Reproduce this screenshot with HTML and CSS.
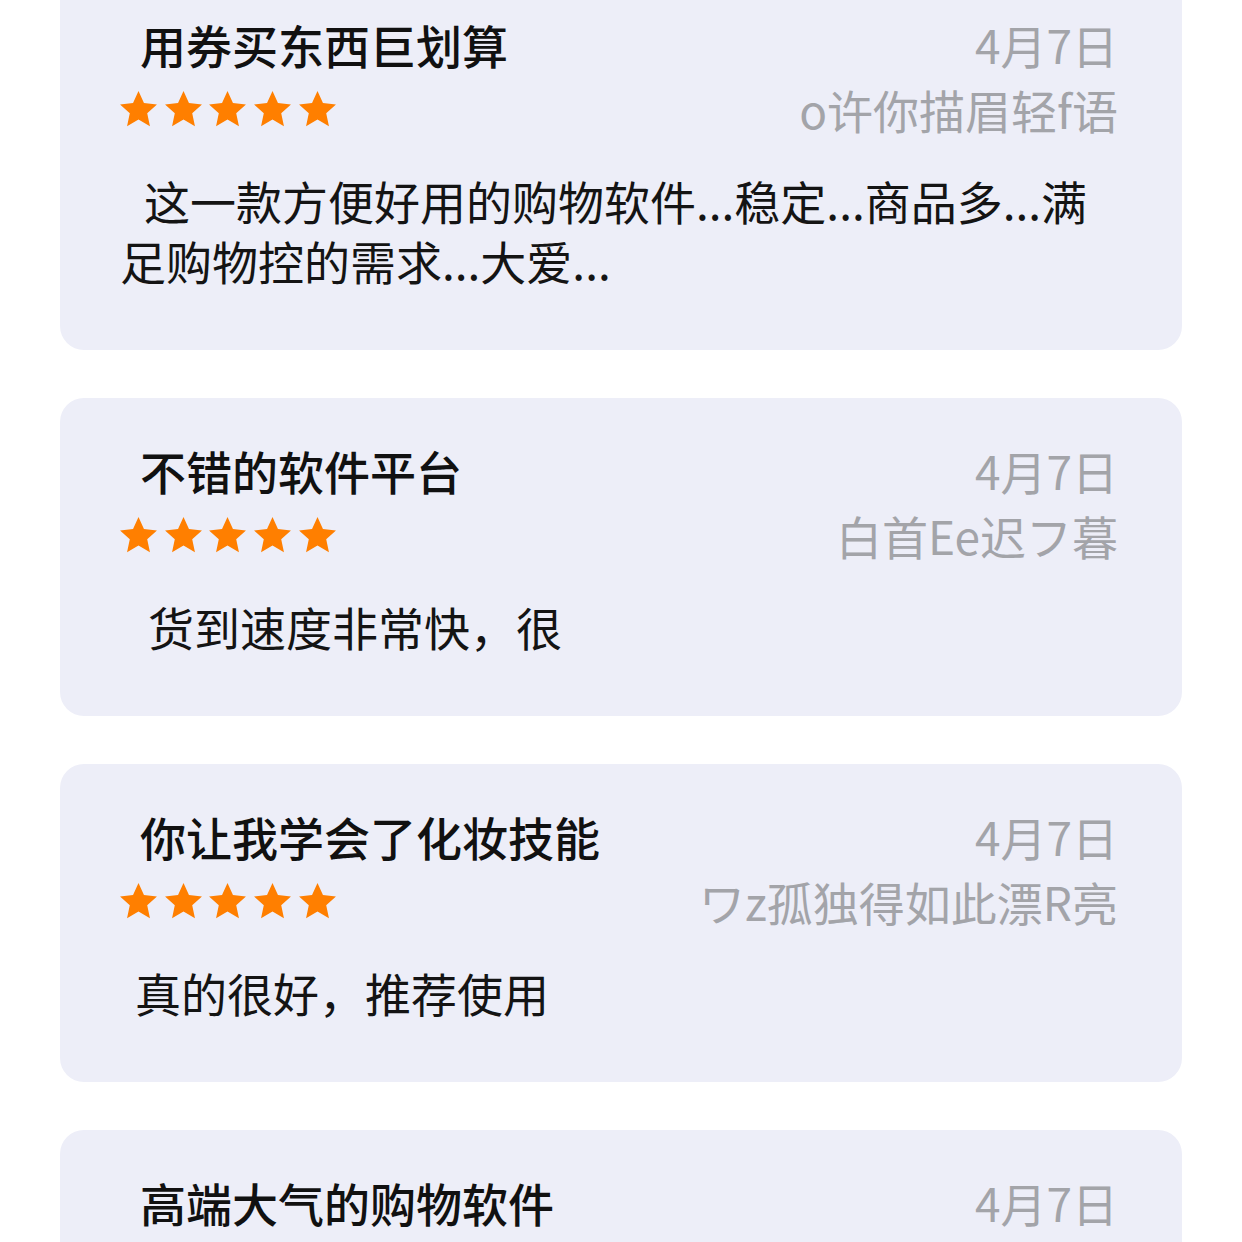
FILE: index.html
```html
<!DOCTYPE html>
<html lang="zh-CN">
<head>
    <meta charset="UTF-8">
    <meta name="viewport" content="width=device-width, initial-scale=1.0">
    <title>评价</title>
    <link rel="stylesheet" href="styles.css">
</head>
<body>
    <div class="review-list">
        <div class="review-card">
            <div class="review-head">
                <span class="review-title">用券买东西巨划算</span>
                <span class="review-date">4月7日</span>
            </div>
            <div class="review-meta">
                <span class="stars">
                    <svg viewBox="0 0 24 24"><path d="M12 1.2l3.2 7 7.6.8-5.7 5.2 1.6 7.6L12 17.9l-6.7 3.9 1.6-7.6L1.2 9l7.6-.8z"/></svg>
                    <svg viewBox="0 0 24 24"><path d="M12 1.2l3.2 7 7.6.8-5.7 5.2 1.6 7.6L12 17.9l-6.7 3.9 1.6-7.6L1.2 9l7.6-.8z"/></svg>
                    <svg viewBox="0 0 24 24"><path d="M12 1.2l3.2 7 7.6.8-5.7 5.2 1.6 7.6L12 17.9l-6.7 3.9 1.6-7.6L1.2 9l7.6-.8z"/></svg>
                    <svg viewBox="0 0 24 24"><path d="M12 1.2l3.2 7 7.6.8-5.7 5.2 1.6 7.6L12 17.9l-6.7 3.9 1.6-7.6L1.2 9l7.6-.8z"/></svg>
                    <svg viewBox="0 0 24 24"><path d="M12 1.2l3.2 7 7.6.8-5.7 5.2 1.6 7.6L12 17.9l-6.7 3.9 1.6-7.6L1.2 9l7.6-.8z"/></svg>
                </span>
                <span class="review-user">o许你描眉轻f语</span>
            </div>
            <p class="review-text indent-md">这一款方便好用的购物软件...稳定...商品多...满足购物控的需求...大爱...</p>
        </div>

        <div class="review-card">
            <div class="review-head">
                <span class="review-title">不错的软件平台</span>
                <span class="review-date">4月7日</span>
            </div>
            <div class="review-meta">
                <span class="stars">
                    <svg viewBox="0 0 24 24"><path d="M12 1.2l3.2 7 7.6.8-5.7 5.2 1.6 7.6L12 17.9l-6.7 3.9 1.6-7.6L1.2 9l7.6-.8z"/></svg>
                    <svg viewBox="0 0 24 24"><path d="M12 1.2l3.2 7 7.6.8-5.7 5.2 1.6 7.6L12 17.9l-6.7 3.9 1.6-7.6L1.2 9l7.6-.8z"/></svg>
                    <svg viewBox="0 0 24 24"><path d="M12 1.2l3.2 7 7.6.8-5.7 5.2 1.6 7.6L12 17.9l-6.7 3.9 1.6-7.6L1.2 9l7.6-.8z"/></svg>
                    <svg viewBox="0 0 24 24"><path d="M12 1.2l3.2 7 7.6.8-5.7 5.2 1.6 7.6L12 17.9l-6.7 3.9 1.6-7.6L1.2 9l7.6-.8z"/></svg>
                    <svg viewBox="0 0 24 24"><path d="M12 1.2l3.2 7 7.6.8-5.7 5.2 1.6 7.6L12 17.9l-6.7 3.9 1.6-7.6L1.2 9l7.6-.8z"/></svg>
                </span>
                <span class="review-user">白首Ee迟フ暮</span>
            </div>
            <p class="review-text indent-lg">货到速度非常快，很</p>
        </div>

        <div class="review-card">
            <div class="review-head">
                <span class="review-title">你让我学会了化妆技能</span>
                <span class="review-date">4月7日</span>
            </div>
            <div class="review-meta">
                <span class="stars">
                    <svg viewBox="0 0 24 24"><path d="M12 1.2l3.2 7 7.6.8-5.7 5.2 1.6 7.6L12 17.9l-6.7 3.9 1.6-7.6L1.2 9l7.6-.8z"/></svg>
                    <svg viewBox="0 0 24 24"><path d="M12 1.2l3.2 7 7.6.8-5.7 5.2 1.6 7.6L12 17.9l-6.7 3.9 1.6-7.6L1.2 9l7.6-.8z"/></svg>
                    <svg viewBox="0 0 24 24"><path d="M12 1.2l3.2 7 7.6.8-5.7 5.2 1.6 7.6L12 17.9l-6.7 3.9 1.6-7.6L1.2 9l7.6-.8z"/></svg>
                    <svg viewBox="0 0 24 24"><path d="M12 1.2l3.2 7 7.6.8-5.7 5.2 1.6 7.6L12 17.9l-6.7 3.9 1.6-7.6L1.2 9l7.6-.8z"/></svg>
                    <svg viewBox="0 0 24 24"><path d="M12 1.2l3.2 7 7.6.8-5.7 5.2 1.6 7.6L12 17.9l-6.7 3.9 1.6-7.6L1.2 9l7.6-.8z"/></svg>
                </span>
                <span class="review-user">ワz孤独得如此漂R亮</span>
            </div>
            <p class="review-text indent-sm">真的很好，推荐使用</p>
        </div>

        <div class="review-card">
            <div class="review-head">
                <span class="review-title">高端大气的购物软件</span>
                <span class="review-date">4月7日</span>
            </div>
        </div>
    </div>
</body>
</html>
```

FILE: styles.css
```css
/* Page */
body {
    margin: 0;
    background: #ffffff;
    font-family: "Noto Sans CJK SC", "Noto Sans", sans-serif;
    color: #111111;
    overflow: hidden;
}

/* List of reviews (scrolled a little, first card cut off at the top) */
.review-list {
    display: flex;
    flex-direction: column;
    gap: 48px;
    margin-top: -28px;
    padding: 0 60px;
}

.review-card {
    background: #edeef8;
    border-radius: 24px;
    padding: 42px 64px 60px 60px;
}

/* Title + date */
.review-head {
    display: flex;
    justify-content: space-between;
    align-items: center;
    height: 60px;
}
.review-title {
    margin-left: 20px;
    font-size: 46px;
    font-weight: 500;
    color: #111111;
}
.review-date {
    font-size: 46px;
    color: #a3a4a9;
}

/* Stars + user name */
.review-meta {
    display: flex;
    justify-content: space-between;
    align-items: center;
    height: 60px;
    margin-top: 5px;
}
.stars {
    display: flex;
    gap: 3.7px;
    margin-left: -2px;
}
.stars svg {
    width: 41px;
    height: 41px;
    fill: #ff7f00;
}
.review-user {
    font-size: 46px;
    color: #a3a4a9;
}

/* Review body */
.review-text {
    margin: 31px 0 0;
    font-size: 46px;
    line-height: 60px;
    color: #141414;
}
.indent-sm {
    text-indent: 15px;
}
.indent-md {
    text-indent: 24px;
}
.indent-lg {
    text-indent: 28px;
}
```
